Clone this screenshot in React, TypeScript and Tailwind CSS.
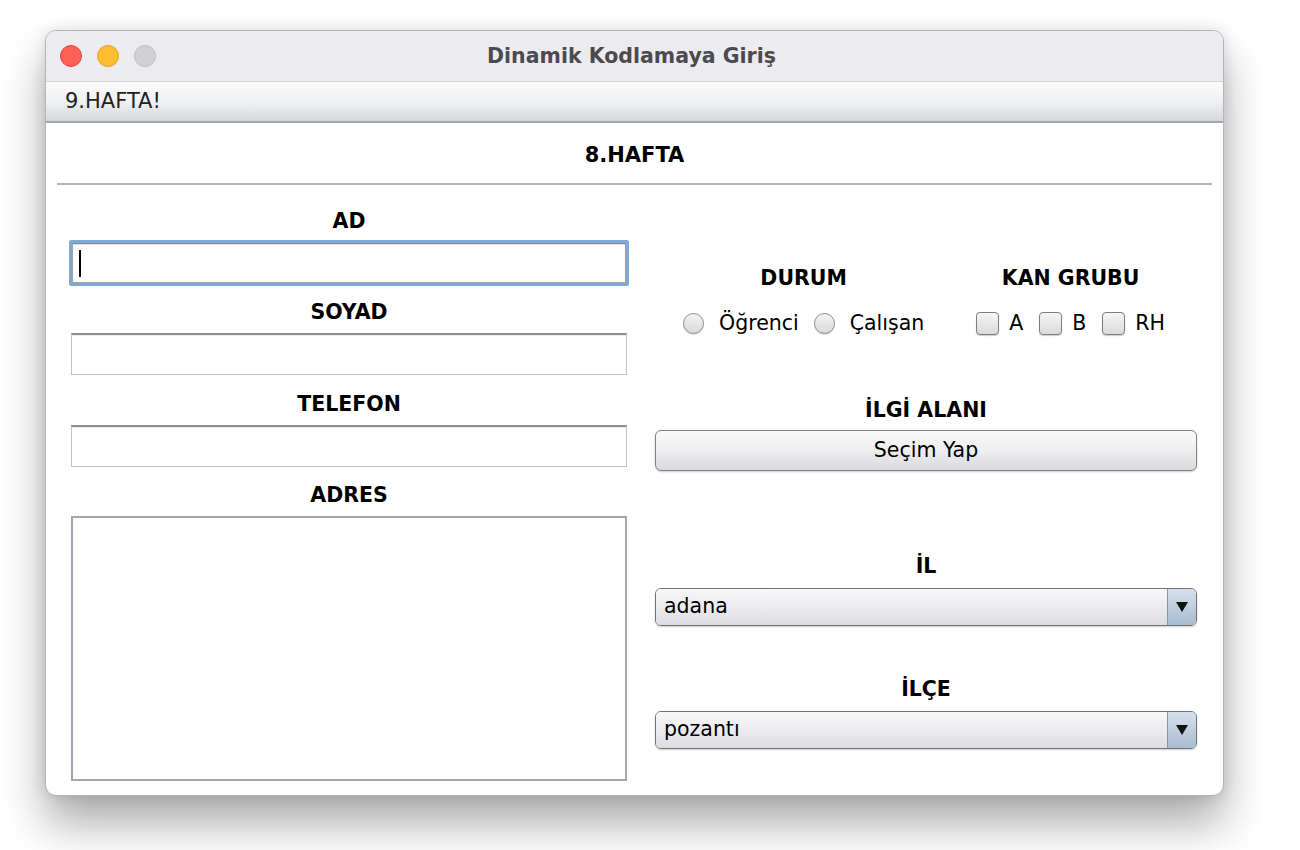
import React from "react";

const FONT = { fontFamily: '"DejaVu Sans", "Noto Sans", sans-serif' };

function Label({ children, className = "" }: { children: React.ReactNode; className?: string }) {
  return (
    <div className={`h-[24px] leading-[24px] text-center text-[20.5px] font-bold text-black ${className}`}>
      {children}
    </div>
  );
}

function TextField({ focused = false }: { focused?: boolean }) {
  if (focused) {
    return (
      <div className="mx-[-2px] border-[3px] border-[#7fa9d6] rounded-[2px]">
        <div className="h-[40px] border border-[#a3a3a3] border-t-[#8a8a8a] bg-white flex items-center pl-[6px] shadow-[inset_0_1px_1px_rgba(0,0,0,0.12)]">
          <div className="w-[1.5px] h-[27px] bg-black" />
        </div>
      </div>
    );
  }
  return (
    <div className="h-[42px] border border-[#c3c3c3] border-t-[#8e8e8e] border-t-2 bg-white shadow-[inset_0_1px_1px_rgba(0,0,0,0.08)]" />
  );
}

function Radio({ label }: { label: string }) {
  return (
    <div className="flex items-center gap-[15px]">
      <div className="w-[21px] h-[21px] rounded-full border border-[#8c8c8c] bg-gradient-to-b from-[#f4f4f4] to-[#d9d9dc] shadow-[0_1px_1px_rgba(0,0,0,0.15)]" />
      <span className="text-[20.5px] text-black">{label}</span>
    </div>
  );
}

function Check({ label }: { label: string }) {
  return (
    <div className="flex items-center gap-[10px]">
      <div className="w-[23px] h-[23px] rounded-[4px] border border-[#7d7d7d] bg-gradient-to-b from-[#f6f6f6] to-[#dadadd] shadow-[0_1px_1px_rgba(0,0,0,0.2)]" />
      <span className="text-[20.5px] text-black">{label}</span>
    </div>
  );
}

function Combo({ value }: { value: string }) {
  return (
    <div className="h-[38px] rounded-[6px] border border-[#727272] flex overflow-hidden shadow-[0_1px_2px_rgba(0,0,0,0.2)]">
      <div className="flex-1 bg-gradient-to-b from-[#f7f7f8] via-[#ececef] to-[#dcdde1] flex items-center pl-[8px] text-[20.5px] text-black">
        {value}
      </div>
      <div className="w-[29px] border-l border-[#8a96a6] bg-gradient-to-b from-[#d6e0ec] to-[#a9bcd1] flex items-center justify-center">
        <svg width="12" height="10" viewBox="0 0 12 10">
          <path d="M0 0 H12 L6 10 Z" fill="#111" />
        </svg>
      </div>
    </div>
  );
}

export default function App() {
  return (
    <div className="w-[1300px] h-[850px] bg-white overflow-hidden" style={FONT}>
      <div className="pt-[30px] pl-[45px]">
        <div className="w-[1179px] h-[766px] rounded-[11px] border border-[#b4b4b8] bg-white flex flex-col overflow-hidden shadow-[0_28px_45px_rgba(0,0,0,0.33),0_0_14px_rgba(0,0,0,0.12)]">
          {/* Title bar */}
          <div className="h-[51px] shrink-0 bg-[#ececf0] border-b border-[#d3d3d7] grid grid-cols-[1fr_auto_1fr] items-center">
            <div className="flex items-center gap-[15px] pl-[14px]">
              <div className="w-[22px] h-[22px] rounded-full bg-[#ff5f57] border border-[#e0443e]" />
              <div className="w-[22px] h-[22px] rounded-full bg-[#febc2e] border border-[#dea123]" />
              <div className="w-[22px] h-[22px] rounded-full bg-[#d1d0d5] border border-[#bebdc2]" />
            </div>
            <div className="text-[20.5px] font-bold text-[#4b4b4f] pr-[6px]">Dinamik Kodlamaya Giriş</div>
            <div />
          </div>
          {/* Menu bar */}
          <div className="h-[41px] shrink-0 bg-gradient-to-b from-[#fbfbfb] via-[#f0f1f2] to-[#d6d7dc] border-b-2 border-[#a3a6ae] flex items-center pl-[19px]">
            <span className="text-[21px] text-[#222]">9.HAFTA!</span>
          </div>
          {/* Content */}
          <div className="flex-1 flex flex-col">
            <div className="h-[60px] flex items-center justify-center pt-[6px]">
              <span className="text-[21px] font-bold text-black">8.HAFTA</span>
            </div>
            <div className="mx-[11px] h-[2px] bg-[#b3b5bc]" />
            <div className="flex pl-[25px] pr-[26px] gap-[28px]">
              {/* Left column */}
              <div className="w-[556px] flex flex-col">
                <Label className="mt-[24px]">AD</Label>
                <div className="mt-[7px]">
                  <TextField focused />
                </div>
                <Label className="mt-[14px]">SOYAD</Label>
                <div className="mt-[9px]">
                  <TextField />
                </div>
                <Label className="mt-[17px]">TELEFON</Label>
                <div className="mt-[9px]">
                  <TextField />
                </div>
                <Label className="mt-[16px]">ADRES</Label>
                <div className="mt-[9px] h-[265px] border-2 border-[#a2a6b0] bg-white" />
              </div>
              {/* Right column */}
              <div className="flex-1 flex flex-col">
                <div className="mt-[81px] flex justify-center gap-[52px] pr-[4px]">
                  <div className="flex flex-col items-center">
                    <Label>DURUM</Label>
                    <div className="mt-[18px] flex items-center gap-[15px]">
                      <Radio label="Öğrenci" />
                      <Radio label="Çalışan" />
                    </div>
                  </div>
                  <div className="flex flex-col items-center">
                    <Label>KAN GRUBU</Label>
                    <div className="mt-[18px] flex items-center gap-[16px]">
                      <Check label="A" />
                      <Check label="B" />
                      <Check label="RH" />
                    </div>
                  </div>
                </div>
                <Label className="mt-[59px]">İLGİ ALANI</Label>
                <button className="mt-[8px] h-[41px] rounded-[6px] border border-[#7e7e7e] bg-gradient-to-b from-[#fbfbfb] via-[#eeeef0] to-[#d9dade] text-[20.5px] text-black shadow-[0_1px_2px_rgba(0,0,0,0.2)]">
                  Seçim Yap
                </button>
                <Label className="mt-[83px]">İL</Label>
                <div className="mt-[10px]">
                  <Combo value="adana" />
                </div>
                <Label className="mt-[51px]">İLÇE</Label>
                <div className="mt-[10px]">
                  <Combo value="pozantı" />
                </div>
              </div>
            </div>
          </div>
        </div>
      </div>
    </div>
  );
}
